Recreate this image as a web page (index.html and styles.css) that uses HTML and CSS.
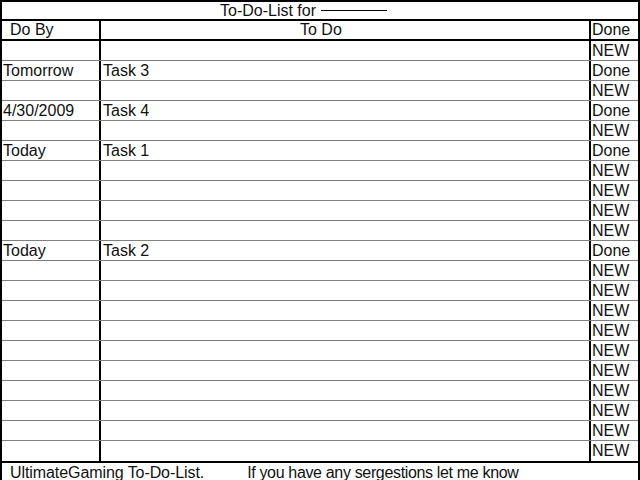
FILE: index.html
```html
<!DOCTYPE html>
<html>
<head>
<meta charset="utf-8">
<link rel="stylesheet" href="styles.css">
</head>
<body>
<div class="sheet">
  <div class="title">To-Do-List for <span class="blank"></span></div>
  <div class="row head">
    <div class="c1 hby">Do By</div>
    <div class="c2 hdo">To Do</div>
    <div class="c3">Done</div>
  </div>
  <div class="rows">
    <div class="row"><div class="c1"></div><div class="c2"></div><div class="c3">NEW</div></div>
    <div class="row"><div class="c1">Tomorrow</div><div class="c2">Task 3</div><div class="c3">Done</div></div>
    <div class="row"><div class="c1"></div><div class="c2"></div><div class="c3">NEW</div></div>
    <div class="row"><div class="c1">4/30/2009</div><div class="c2">Task 4</div><div class="c3">Done</div></div>
    <div class="row"><div class="c1"></div><div class="c2"></div><div class="c3">NEW</div></div>
    <div class="row"><div class="c1">Today</div><div class="c2">Task 1</div><div class="c3">Done</div></div>
    <div class="row"><div class="c1"></div><div class="c2"></div><div class="c3">NEW</div></div>
    <div class="row"><div class="c1"></div><div class="c2"></div><div class="c3">NEW</div></div>
    <div class="row"><div class="c1"></div><div class="c2"></div><div class="c3">NEW</div></div>
    <div class="row"><div class="c1"></div><div class="c2"></div><div class="c3">NEW</div></div>
    <div class="row"><div class="c1">Today</div><div class="c2">Task 2</div><div class="c3">Done</div></div>
    <div class="row"><div class="c1"></div><div class="c2"></div><div class="c3">NEW</div></div>
    <div class="row"><div class="c1"></div><div class="c2"></div><div class="c3">NEW</div></div>
    <div class="row"><div class="c1"></div><div class="c2"></div><div class="c3">NEW</div></div>
    <div class="row"><div class="c1"></div><div class="c2"></div><div class="c3">NEW</div></div>
    <div class="row"><div class="c1"></div><div class="c2"></div><div class="c3">NEW</div></div>
    <div class="row"><div class="c1"></div><div class="c2"></div><div class="c3">NEW</div></div>
    <div class="row"><div class="c1"></div><div class="c2"></div><div class="c3">NEW</div></div>
    <div class="row"><div class="c1"></div><div class="c2"></div><div class="c3">NEW</div></div>
    <div class="row"><div class="c1"></div><div class="c2"></div><div class="c3">NEW</div></div>
    <div class="row last"><div class="c1"></div><div class="c2"></div><div class="c3">NEW</div></div>
  </div>
  <div class="footer"><span class="f1">UltimateGaming To-Do-List.</span><span class="f2">If you have any sergestions let me know</span></div>
</div>
</body>
</html>
```

FILE: styles.css
```css
html, body {
  margin: 0;
  padding: 0;
  background: #fff;
}
body {
  font-family: "Liberation Sans", Arial, sans-serif;
  font-size: 16px;
  color: #111;
}
.sheet {
  box-sizing: border-box;
  width: 640px;
  height: 480px;
  border: 2px solid #000;
  border-bottom: none;
  overflow: hidden;
}
.title {
  height: 17px;
  line-height: 17px;
  border-bottom: 2px solid #000;
  padding-left: 218px;
  white-space: nowrap;
}
.blank {
  display: inline-block;
  width: 66px;
  border-top: 1px solid #000;
  vertical-align: 5px;
  margin-left: 1px;
}
.row {
  display: flex;
  height: 20px;
  box-sizing: border-box;
  border-bottom: 1px solid #808080;
  line-height: 19px;
}
.row.last {
  border-bottom: none;
}
.row.head {
  height: 20px;
  line-height: 18px;
  border-bottom: 2px solid #000;
}
.c1 {
  box-sizing: border-box;
  width: 99px;
  border-right: 2px solid #000;
  padding-left: 1px;
  white-space: nowrap;
}
.c2 {
  box-sizing: border-box;
  width: 490px;
  border-right: 2px solid #000;
  padding-left: 2px;
  white-space: nowrap;
}
.c3 {
  flex: 1;
  padding-left: 1px;
  white-space: nowrap;
}
.hby {
  padding-left: 8px;
}
.hdo {
  padding-left: 199px;
}
.footer {
  border-top: 2px solid #000;
  height: 19px;
  line-height: 19px;
  padding-left: 8px;
  white-space: nowrap;
}
.f1 {
  letter-spacing: -0.08px;
}
.f2 {
  margin-left: 43px;
  letter-spacing: -0.34px;
}
```
